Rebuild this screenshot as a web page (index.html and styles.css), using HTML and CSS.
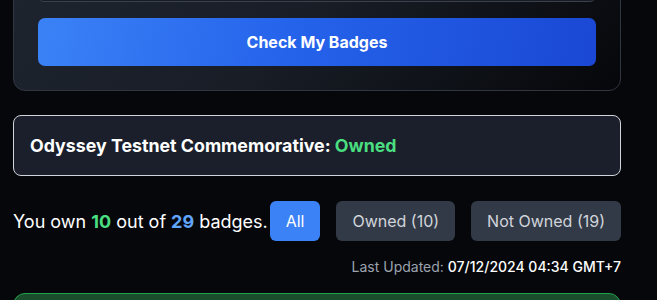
FILE: index.html
```html
<!DOCTYPE html>
<html>
  <head>
    <title>Badge Checker</title>
    <link rel="stylesheet" href="styles.css">
  </head>
  <body>
    <div class="page">
      <div class="check-card">
        <input class="address-input" type="text" placeholder="Enter wallet address">
        <button class="check-btn">Check My Badges</button>
      </div>

      <div class="commemorative">
        Odyssey Testnet Commemorative: <span class="owned">Owned</span>
      </div>

      <div class="summary">
        <div class="summary-text">
          You own <span class="count-owned">10</span> out of
          <span class="count-total">29</span> badges.
        </div>
        <div class="filters">
          <button class="filter active">All</button>
          <button class="filter">Owned (10)</button>
          <button class="filter">Not Owned (19)</button>
        </div>
      </div>

      <div class="last-updated">
        Last Updated: <span class="date">07/12/2024 04:34 GMT+7</span>
      </div>

      <div class="badge-card owned-card"></div>
    </div>
  </body>
</html>
```

FILE: styles.css
```css
body {
  margin: 0;
  background: #06070b;
  font-family: Inter, "Noto Sans", sans-serif;
  color: #f3f4f6;
  overflow: hidden;
}
.page {
  width: 608px;
  margin: -67px 0 0 13px;
}
.check-card {
  padding: 24px;
  border: 1px solid #2f3541;
  border-radius: 12px;
  background: linear-gradient(135deg, #1f2530 0%, #181d26 50%, #06070a 100%);
  display: flex;
  flex-direction: column;
  gap: 16px;
}
.address-input {
  height: 44px;
  box-sizing: border-box;
  border: 1px solid #3a404c;
  border-radius: 6px;
  background: #161b24;
  color: #f3f4f6;
  padding: 0 12px;
  font-family: inherit;
  font-size: 15px;
}
.check-btn {
  height: 48px;
  border: none;
  border-radius: 7px;
  background: linear-gradient(100deg, #3b82f6 0%, #2563eb 45%, #1a48d4 100%);
  color: #fff;
  font-family: inherit;
  font-size: 16px;
  font-weight: 700;
  cursor: pointer;
}
.commemorative {
  margin-top: 24px;
  padding: 16px;
  border: 1px solid #d1d5db;
  border-radius: 8px;
  background: #1a1f2b;
  font-size: 17.8px;
  line-height: 27px;
  font-weight: 700;
  color: #fff;
}
.owned {
  color: #4ade80;
}
.summary {
  margin-top: 25px;
  display: flex;
  align-items: center;
  justify-content: space-between;
}
.summary-text {
  font-size: 18px;
  color: #fff;
  white-space: nowrap;
}
.count-owned {
  color: #4ade80;
  font-weight: 700;
}
.count-total {
  color: #60a5fa;
  font-weight: 700;
}
.filters {
  display: flex;
  gap: 16px;
}
.filter {
  height: 40px;
  padding: 0 16px;
  border: none;
  border-radius: 6px;
  background: #333a47;
  color: #d1d5db;
  font-family: inherit;
  font-size: 16px;
  white-space: nowrap;
  cursor: pointer;
}
.filter.active {
  background: #3b82f6;
  color: #fff;
}
.last-updated {
  margin-top: 16px;
  text-align: right;
  font-size: 14px;
  line-height: 20px;
  color: #9ca3af;
}
.last-updated .date {
  color: #fff;
  font-weight: 500;
}
.badge-card {
  margin-top: 16px;
  height: 120px;
  border-radius: 12px;
}
.owned-card {
  border: 1px solid #22a04b;
  background: #1a4d2c;
}
```
